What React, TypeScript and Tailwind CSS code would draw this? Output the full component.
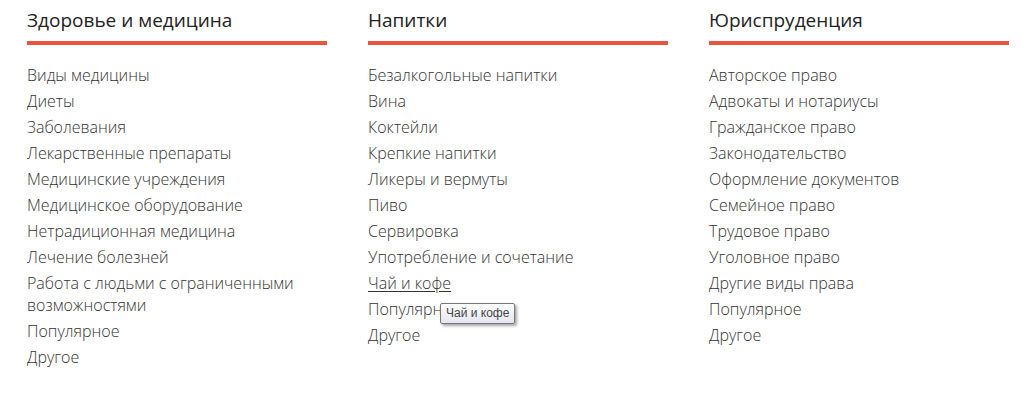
import React from 'react'

const columns = [
  {
    title: 'Здоровье и медицина',
    items: [
      'Виды медицины',
      'Диеты',
      'Заболевания',
      'Лекарственные препараты',
      'Медицинские учреждения',
      'Медицинское оборудование',
      'Нетрадиционная медицина',
      'Лечение болезней',
      'Работа с людьми с ограниченными возможностями',
      'Популярное',
      'Другое',
    ],
  },
  {
    title: 'Напитки',
    items: [
      'Безалкогольные напитки',
      'Вина',
      'Коктейли',
      'Крепкие напитки',
      'Ликеры и вермуты',
      'Пиво',
      'Сервировка',
      'Употребление и сочетание',
      'Чай и кофе',
      'Популярное',
      'Другое',
    ],
  },
  {
    title: 'Юриспруденция',
    items: [
      'Авторское право',
      'Адвокаты и нотариусы',
      'Гражданское право',
      'Законодательство',
      'Оформление документов',
      'Семейное право',
      'Трудовое право',
      'Уголовное право',
      'Другие виды права',
      'Популярное',
      'Другое',
    ],
  },
]

// native title tooltip, frozen over "Популярное"
const Tooltip = () => (
  <span
    className="absolute left-[72px] top-[7px] z-10 whitespace-nowrap rounded-[2px] border border-[#767676] bg-gradient-to-b from-white to-[#e4e5f0] px-[5px] py-[2px] text-[12px] leading-[15px] text-[#444] shadow-[2px_2px_3px_rgba(0,0,0,0.35)]"
    style={{ fontFamily: '"Liberation Sans", "DejaVu Sans", sans-serif' }}
  >
    Чай и кофе
  </span>
)

export default function App() {
  return (
    <div
      className="min-h-[407px] bg-white pl-[27px] pt-[6px] text-[#333]"
      style={{ fontFamily: '"Open Sans", sans-serif' }}
    >
      <div className="flex gap-[41px]">
        {columns.map((col) => (
          <div key={col.title} className="w-[300px]">
            <h2 className="text-[19px] font-normal leading-[28px] text-[#222]">{col.title}</h2>
            <div className="mt-[7px] h-[4px] bg-[#e8553d]" />
            <ul className="mt-[17px]">
              {col.items.map((it) => {
                const hover = col.title === 'Напитки' && it === 'Чай и кофе'
                return (
                  <li key={it} className="relative py-[2px] text-[16px] font-light leading-[22px]">
                    <a
                      href="#"
                      className={'text-[#333] ' + (hover ? 'underline underline-offset-2' : 'no-underline')}
                    >
                      {it}
                    </a>
                    {it === 'Популярное' && col.title === 'Напитки' && <Tooltip />}
                  </li>
                )
              })}
            </ul>
          </div>
        ))}
      </div>
    </div>
  )
}
